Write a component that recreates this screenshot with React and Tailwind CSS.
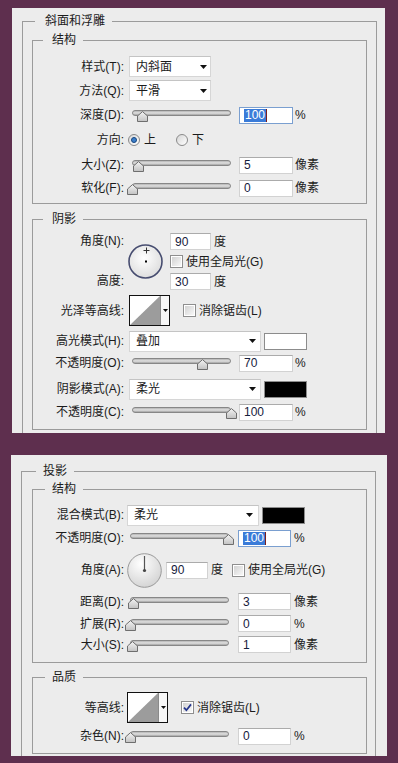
import React from "react";

function Arrow() {
  return (
    <svg width="7" height="4" viewBox="0 0 7 4" className="shrink-0">
      <path d="M0 0h7L3.5 4z" fill="#111" />
    </svg>
  );
}

function Group({ title, tc, className, children }) {
  return (
    <div className={`relative border border-[#9b9b9b] ${className}`}>
      <span className={`absolute -top-[8px] whitespace-nowrap bg-[#ececec] leading-[15px] ${tc}`}>
        {title}
      </span>
      {children}
    </div>
  );
}

function Label({ children }) {
  return <div className="w-[91px] shrink-0 whitespace-nowrap text-right">{children}</div>;
}

function Row({ h, className = "", children }) {
  return <div className={`flex items-center ${h} ${className}`}>{children}</div>;
}

function Select({ value, className }) {
  return (
    <div
      className={`flex h-[21px] shrink-0 items-center justify-between border border-[#d6d6d6] border-t-[#c4c4c4] bg-white pl-[6px] ${className}`}
    >
      <span>{value}</span>
      <Arrow />
    </div>
  );
}

function Swatch({ className }) {
  return <div className={`h-[17px] w-[43px] shrink-0 border border-[#8c8c8c] ${className}`} />;
}

function Slider({ at, className = "" }) {
  return (
    <div className={`relative h-[16px] w-[99px] shrink-0 ${className}`}>
      <div className="absolute inset-x-0 top-[3px] h-[6px] rounded-full border border-[#878787] bg-linear-to-b from-[#b4b4b4] via-[#e2e2e2] to-[#a2a2a2]" />
      <svg
        className="absolute top-[4px]"
        style={{ left: at - 5.5 }}
        width="11"
        height="11"
        viewBox="0 0 11 11"
      >
        <defs>
          <linearGradient id="thumb" x1="0" y1="0" x2="0" y2="1">
            <stop offset="0" stopColor="#f4f4f4" />
            <stop offset="1" stopColor="#c2c2c2" />
          </linearGradient>
        </defs>
        <path d="M5.5 0.6L10.5 5v5.5H0.5V5z" fill="url(#thumb)" stroke="#6e6e6e" />
      </svg>
    </div>
  );
}

function Field({ value, sel, className }) {
  return (
    <div
      className={`flex h-[17px] shrink-0 items-center border bg-white pl-[4px] text-[#16203c] ${
        sel ? "border-[#7a9fd0]" : "border-[#d2d2d2] border-t-[#ababab]"
      } ${className}`}
    >
      {sel ? (
        <>
          <span className="bg-[#3a7bd8] px-[1px] leading-[13px] text-white">{value}</span>
          <span className="h-[13px] w-px bg-[#7a1e1e]" />
        </>
      ) : (
        value
      )}
    </div>
  );
}

function Check({ checked, className = "" }) {
  return (
    <div className={`h-[13px] w-[13px] shrink-0 border border-[#8e8e8e] bg-white p-[1px] ${className}`}>
      <div className="flex h-full w-full items-center justify-center bg-linear-to-br from-[#d2d2d2] to-[#f8f8f8]">
        {checked && (
          <svg width="9" height="9" viewBox="0 0 9 9">
            <path d="M1 4.6l2.4 2.6L8 1.4" fill="none" stroke="#25368c" strokeWidth="1.7" />
          </svg>
        )}
      </div>
    </div>
  );
}

function Radio({ on, className = "" }) {
  return (
    <div
      className={`flex h-[12px] w-[12px] shrink-0 items-center justify-center rounded-full border border-[#8a8a8a] bg-linear-to-br from-[#d6d6d6] to-white ${className}`}
    >
      {on && <div className="h-[6px] w-[6px] rounded-full border border-[#17467e] bg-[#3b7fcb]" />}
    </div>
  );
}

function Contour({ className = "" }) {
  return (
    <div className={`flex h-[31px] w-[41px] shrink-0 border border-[#111] bg-white ${className}`}>
      <svg width="30" height="29" viewBox="0 0 30 29" className="shrink-0">
        <polygon points="0,29 30,0 30,29" fill="#9c9c9c" />
      </svg>
      <div className="flex flex-1 items-center justify-center border-l border-[#8a8a8a] bg-[#f7f7f7]">
        <svg width="5" height="3" viewBox="0 0 5 3">
          <path d="M0 0h5L2.5 3z" fill="#111" />
        </svg>
      </div>
    </div>
  );
}

function DialBevel() {
  return (
    <svg width="35" height="35" viewBox="0 0 35 35">
      <defs>
        <radialGradient id="dialA" cx="45%" cy="40%" r="60%">
          <stop offset="0" stopColor="#ffffff" />
          <stop offset="1" stopColor="#dedede" />
        </radialGradient>
      </defs>
      <circle cx="17.5" cy="17.5" r="16.5" fill="url(#dialA)" stroke="#474d70" strokeWidth="1.6" />
      <path d="M18.5 3.5v6M15.5 6.5h6" stroke="#333" strokeWidth="1" />
      <rect x="17" y="16.5" width="2" height="2" fill="#000" />
    </svg>
  );
}

function DialShadow() {
  return (
    <svg width="35" height="35" viewBox="0 0 35 35">
      <defs>
        <radialGradient id="dialB" cx="40%" cy="30%" r="75%">
          <stop offset="0" stopColor="#ffffff" />
          <stop offset="1" stopColor="#d2d2d2" />
        </radialGradient>
      </defs>
      <circle cx="17.5" cy="17.5" r="16.8" fill="url(#dialB)" stroke="#9a9a9a" strokeWidth="1" />
      <path d="M17.5 17.5V3" stroke="#555" strokeWidth="1.2" />
      <circle cx="17.5" cy="17.5" r="1.6" fill="#444" />
    </svg>
  );
}

export default function App() {
  return (
    <div className="h-[763px] w-[398px] overflow-hidden bg-[#5e2f4e] pt-[8px] font-['Liberation_Sans','Noto_Sans_CJK_SC',sans-serif] text-[12px] leading-[14px] text-[#1b1b1b]">
      {/* 斜面和浮雕 */}
      <div className="ml-[12px] h-[425px] w-[373px] overflow-hidden bg-[#ececec] pt-[13px]">
        <Group title="斜面和浮雕" tc="left-[12px] pl-[10px] pr-[7px]" className="ml-[10px] w-[355px] pb-[10px]">
          <Group title="结构" tc="left-[10px] pl-[9px] pr-[7px]" className="mx-[9px] mt-[18px] h-[164px] pt-[14px]">
            <Row h="h-[23px]">
              <Label>样式(T):</Label>
              <Select value="内斜面" className="ml-[5px] w-[82px] pr-[3px]" />
            </Row>
            <Row h="h-[25px]">
              <Label>方法(Q):</Label>
              <Select value="平滑" className="ml-[5px] w-[82px] pr-[3px]" />
            </Row>
            <Row h="h-[24px]">
              <Label>深度(D):</Label>
              <Slider at={10.5} className="ml-[8px]" />
              <Field value="100" sel className="ml-[8px] w-[54px]" />
              <span className="ml-[2px]">%</span>
            </Row>
            <Row h="h-[26px]">
              <Label>方向:</Label>
              <Radio on className="ml-[4px]" />
              <span className="ml-[4px]">上</span>
              <Radio className="ml-[20px]" />
              <span className="ml-[4px]">下</span>
            </Row>
            <Row h="h-[24px]">
              <Label>大小(Z):</Label>
              <Slider at={6} className="ml-[8px]" />
              <Field value="5" className="ml-[8px] w-[54px]" />
              <span className="ml-[2px]">像素</span>
            </Row>
            <Row h="h-[22px]">
              <Label>软化(F):</Label>
              <Slider at={0.5} className="ml-[8px]" />
              <Field value="0" className="ml-[8px] w-[54px]" />
              <span className="ml-[2px]">像素</span>
            </Row>
          </Group>

          <Group title="阴影" tc="left-[10px] pl-[9px] pr-[7px]" className="mx-[9px] mt-[15px] h-[211px] pt-[12px]">
            <div className="flex h-[59px]">
              <div className="flex w-[91px] shrink-0 flex-col text-right">
                <div className="h-[19px] leading-[19px]">角度(N):</div>
                <div className="h-[21px]" />
                <div className="h-[19px] leading-[19px]">高度:</div>
              </div>
              <div className="ml-[4px] flex items-center">
                <DialBevel />
              </div>
              <div className="ml-[7px] flex flex-col">
                <Row h="h-[19px]">
                  <Field value="90" className="w-[41px]" />
                  <span className="ml-[3px]">度</span>
                </Row>
                <Row h="h-[21px]">
                  <Check />
                  <span className="ml-[3px]">使用全局光(G)</span>
                </Row>
                <Row h="h-[19px]">
                  <Field value="30" className="w-[41px]" />
                  <span className="ml-[3px]">度</span>
                </Row>
              </div>
            </div>
            <Row h="h-[31px]" className="mt-[4px]">
              <Label>光泽等高线:</Label>
              <Contour className="ml-[5px]" />
              <Check className="ml-[13px]" />
              <span className="ml-[3px]">消除锯齿(L)</span>
            </Row>
            <Row h="h-[22px]" className="mt-[4px]">
              <Label>高光模式(H):</Label>
              <Select value="叠加" className="ml-[5px] w-[132px] pr-[4px]" />
              <Swatch className="ml-[3px] bg-white" />
            </Row>
            <Row h="h-[22px]">
              <Label>不透明度(O):</Label>
              <Slider at={70} className="ml-[8px]" />
              <Field value="70" className="ml-[8px] w-[54px]" />
              <span className="ml-[2px]">%</span>
            </Row>
            <Row h="h-[22px]" className="mt-[4px]">
              <Label>阴影模式(A):</Label>
              <Select value="柔光" className="ml-[5px] w-[132px] pr-[4px]" />
              <Swatch className="ml-[3px] bg-black" />
            </Row>
            <Row h="h-[24px]">
              <Label>不透明度(C):</Label>
              <Slider at={99} className="ml-[8px]" />
              <Field value="100" className="ml-[8px] w-[54px]" />
              <span className="ml-[2px]">%</span>
            </Row>
          </Group>
        </Group>
      </div>

      {/* 投影 */}
      <div className="ml-[11px] mt-[22px] h-[301px] w-[376px] overflow-hidden bg-[#ececec] pt-[16px]">
        <Group title="投影" tc="left-[14px] pl-[7px] pr-[7px]" className="ml-[10px] w-[355px] pb-[10px]">
          <Group title="结构" tc="left-[12px] pl-[7px] pr-[7px]" className="ml-[10px] mr-[8px] mt-[17px] h-[174px] pt-[14px]">
            <Row h="h-[22px]">
              <Label>混合模式(B):</Label>
              <Select value="柔光" className="ml-[3px] w-[132px] pr-[5px]" />
              <Swatch className="ml-[3px] bg-black" />
            </Row>
            <Row h="h-[24px]">
              <Label>不透明度(O):</Label>
              <Slider at={98} className="ml-[6px]" />
              <Field value="100" sel className="ml-[9px] w-[53px]" />
              <span className="ml-[3px]">%</span>
            </Row>
            <Row h="h-[40px]">
              <Label>角度(A):</Label>
              <div className="ml-[3px] flex items-center">
                <DialShadow />
              </div>
              <Field value="90" className="ml-[4px] w-[42px]" />
              <span className="ml-[3px]">度</span>
              <Check className="ml-[9px]" />
              <span className="ml-[3px]">使用全局光(G)</span>
            </Row>
            <Row h="h-[23px]">
              <Label>距离(D):</Label>
              <Slider at={3.5} className="ml-[6px]" />
              <Field value="3" className="ml-[9px] w-[53px]" />
              <span className="ml-[3px]">像素</span>
            </Row>
            <Row h="h-[21px]">
              <Label>扩展(R):</Label>
              <Slider at={0} className="ml-[6px]" />
              <Field value="0" className="ml-[9px] w-[53px]" />
              <span className="ml-[3px]">%</span>
            </Row>
            <Row h="h-[21px]">
              <Label>大小(S):</Label>
              <Slider at={2} className="ml-[6px]" />
              <Field value="1" className="ml-[9px] w-[53px]" />
              <span className="ml-[3px]">像素</span>
            </Row>
          </Group>

          <Group title="品质" tc="left-[12px] pl-[7px] pr-[7px]" className="ml-[10px] mr-[8px] mt-[14px] h-[77px] pt-[14px]">
            <Row h="h-[31px]">
              <Label>等高线:</Label>
              <Contour className="ml-[3px]" />
              <Check checked className="ml-[13px]" />
              <span className="ml-[3px]">消除锯齿(L)</span>
            </Row>
            <Row h="h-[22px]" className="mt-[2px]">
              <Label>杂色(N):</Label>
              <Slider at={0} className="ml-[6px]" />
              <Field value="0" className="ml-[9px] w-[53px]" />
              <span className="ml-[3px]">%</span>
            </Row>
          </Group>
        </Group>
      </div>
    </div>
  );
}
